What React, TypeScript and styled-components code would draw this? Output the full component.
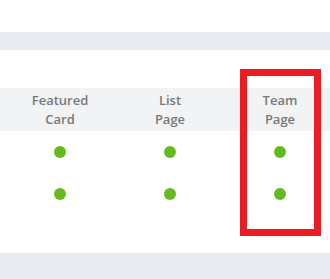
import styled, { createGlobalStyle } from 'styled-components';

const GlobalStyle = createGlobalStyle`
  html, body {
    margin: 0;
    padding: 0;
    background: #ffffff;
    overflow: hidden;
  }
  body {
    font-family: "Open Sans", "Liberation Sans", sans-serif;
  }
`;

const columns = ['Featured\nCard', 'List\nPage', 'Team\nPage'];
const rows = [[true, true, true], [true, true, true]];

const App = () => {
  return (
    <Page>
      <GlobalStyle />
      <Band $top={32} $height={18} />
      <Table>
        <HeaderRow>
          <Cell />
          {columns.map(c => (
            <HeadCell key={c}>{c}</HeadCell>
          ))}
        </HeaderRow>
        {rows.map((r, i) => (
          <Row key={i}>
            <Cell />
            {r.map((on, j) => (
              <Cell key={j}>{on && <Dot />}</Cell>
            ))}
          </Row>
        ))}
      </Table>
      <Band $top={38} $height={40} />
      <Highlight />
    </Page>
  );
};

export default App;

const Page = styled.div`
  position: relative;
  width: 330px;
  height: 279px;
  overflow: hidden;
  background: #ffffff;
`;

const Band = styled.div<{$top: number, $height: number}>`
  margin-top: ${props => props.$top}px;
  height: ${props => props.$height}px;
  background: #e8ebf2;
`;

const Table = styled.div`
  margin-top: 38px;
  display: flex;
  flex-direction: column;
`;

const Row = styled.div`
  display: grid;
  grid-template-columns: 5px repeat(3, 110px);
  height: 42px;
  align-items: center;
`;

const HeaderRow = styled(Row)`
  height: 43px;
  background: #f2f3f5;
`;

const Cell = styled.div`
  display: flex;
  justify-content: center;
  align-items: center;
`;

const HeadCell = styled(Cell)`
  white-space: pre-line;
  text-align: center;
  font-size: 13px;
  font-weight: 600;
  line-height: 19px;
  color: #787878;
`;

const Dot = styled.span`
  width: 12px;
  height: 12px;
  border-radius: 50%;
  background: #64bb1f;
`;

const Highlight = styled.div`
  position: absolute;
  left: 240px;
  top: 69px;
  width: 81px;
  height: 167px;
  box-sizing: border-box;
  border: 7px solid #ed1c24;
`;
